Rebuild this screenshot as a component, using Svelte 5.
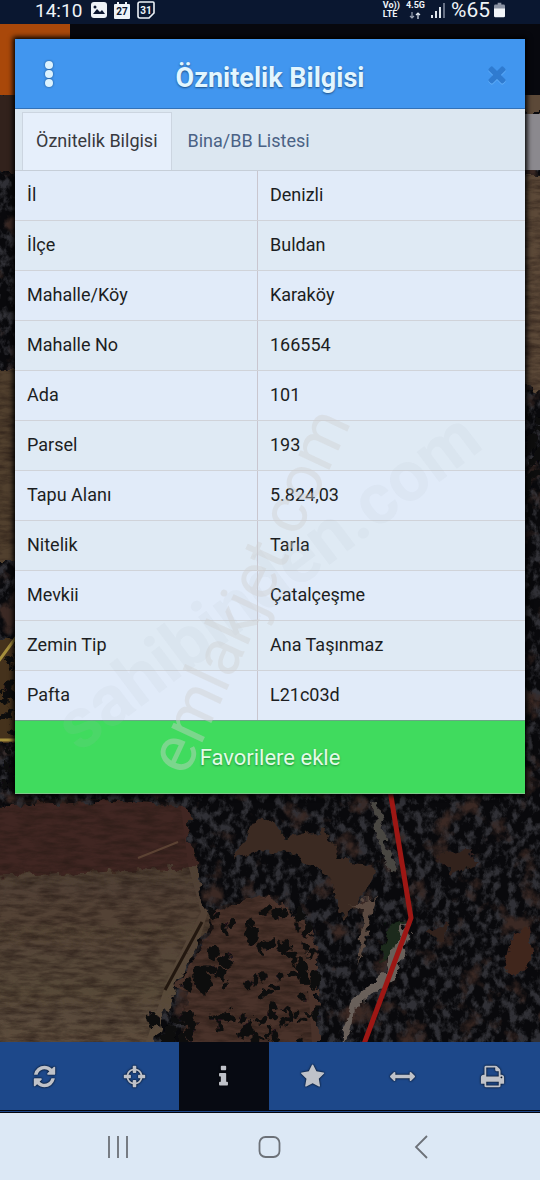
<script>
    import { onMount } from "svelte";

    let activeTab = "info";
    let activeTool = "info";
    let favorite = false;
    let open = true;

    const rows = [
        ["İl", "Denizli"],
        ["İlçe", "Buldan"],
        ["Mahalle/Köy", "Karaköy"],
        ["Mahalle No", "166554"],
        ["Ada", "101"],
        ["Parsel", "193"],
        ["Tapu Alanı", "5.824,03"],
        ["Nitelik", "Tarla"],
        ["Mevkii", "Çatalçeşme"],
        ["Zemin Tip", "Ana Taşınmaz"],
        ["Pafta", "L21c03d"],
    ];

    const tools = [
        { id: "refresh", label: "Yenile", d: "M1639 1056q0 5-1 7-64 268-268 434.5t-478 166.5q-146 0-282.5-55t-243.5-157l-129 129q-19 19-45 19t-45-19-19-45v-448q0-26 19-45t45-19h448q26 0 45 19t19 45-19 45l-137 137q71 66 161 102t187 36q134 0 250-65t186-179q11-17 53-117 8-23 30-23h192q13 0 22.5 9.5t9.5 22.5zm25-800v448q0 26-19 45t-45 19h-448q-26 0-45-19t-19-45 19-45l138-138q-148-137-349-137-134 0-250 65t-186 179q-11 17-53 117-8 23-30 23h-199q-13 0-22.5-9.5t-9.5-22.5v-7q65-268 270-434.5t480-166.5q146 0 284 55.5t245 156.5l130-129q19-19 45-19t45 19 19 45z" },
        { id: "locate", label: "Konum", d: "M1325 1024h-109q-26 0-45-19t-19-45v-128q0-26 19-45t45-19h109q-32-108-112.5-188.5t-188.5-112.5v109q0 26-19 45t-45 19h-128q-26 0-45-19t-19-45v-109q-108 32-188.5 112.5t-112.5 188.5h109q26 0 45 19t19 45v128q0 26-19 45t-45 19h-109q32 108 112.5 188.5t188.5 112.5v-109q0-26 19-45t45-19h128q26 0 45 19t19 45v109q108-32 188.5-112.5t112.5-188.5zm339-192v128q0 26-19 45t-45 19h-143q-37 161-154.5 278.5t-278.5 154.5v143q0 26-19 45t-45 19h-128q-26 0-45-19t-19-45v-143q-161-37-278.5-154.5t-154.5-278.5h-143q-26 0-45-19t-19-45v-128q0-26 19-45t45-19h143q37-161 154.5-278.5t278.5-154.5v-143q0-26 19-45t45-19h128q26 0 45 19t19 45v143q161 37 278.5 154.5t154.5 278.5h143q26 0 45 19t19 45z" },
        { id: "info", label: "Bilgi", d: "M1216 1344v128q0 26-19 45t-45 19h-512q-26 0-45-19t-19-45v-128q0-26 19-45t45-19h64v-384h-64q-26 0-45-19t-19-45v-128q0-26 19-45t45-19h384q26 0 45 19t19 45v576h64q26 0 45 19t19 45zm-128-1152v192q0 26-19 45t-45 19h-256q-26 0-45-19t-19-45v-192q0-26 19-45t45-19h256q26 0 45 19t19 45z" },
        { id: "star", label: "Favoriler", d: "M1664 647q0 22-26 48l-363 354 86 500q1 7 1 20 0 21-10.5 35.5t-30.5 14.5q-19 0-40-12l-449-236-449 236q-22 12-40 12-21 0-31.5-14.5t-10.5-35.5q0-6 2-20l86-500-364-354q-25-27-25-48 0-37 56-46l502-73 225-455q19-41 49-41t49 41l225 455 502 73q56 9 56 46z" },
        { id: "measure", label: "Ölçüm", d: "M1792 896q0 26-19 45l-256 256q-19 19-45 19t-45-19-19-45v-128h-1024v128q0 26-19 45t-45 19-45-19l-256-256q-19-19-19-45t19-45l256-256q19-19 45-19t45 19 19 45v128h1024v-128q0-26 19-45t45-19 45 19l256 256q19 19 19 45z" },
        { id: "print", label: "Yazdır", d: "M448 1536h896v-256h-896v256zm0-640h896v-384h-160q-40 0-68-28t-28-68v-160h-640v640zm1152 64q0-26-19-45t-45-19-45 19-19 45 19 45 45 19 45-19 19-45zm128 0v416q0 13-9.5 22.5t-22.5 9.5h-224v160q0 40-28 68t-68 28h-960q-40 0-68-28t-28-68v-160h-224q-13 0-22.5-9.5t-9.5-22.5v-416q0-79 56.5-135.5t135.5-56.5h64v-544q0-40 28-68t68-28h672q40 0 88 20t76 48l152 152q28 28 48 76t20 88v256h64q79 0 135.5 56.5t56.5 135.5z" },
    ];

    // same bushes on every load
    let seed = 11;
    function rnd() {
        seed = (seed * 16807) % 2147483647;
        return seed / 2147483647;
    }
    function scatter(n, x, y, w, h, min, max) {
        return Array.from({ length: n }, () => ({
            x: x + rnd() * w,
            y: y + rnd() * h,
            rx: min + rnd() * (max - min),
            ry: min + rnd() * (max - min) * 1.3,
        }));
    }
    const bushes = [
        ...scatter(85, 208, 908, 106, 132, 2, 6),
        ...scatter(14, 150, 1014, 40, 28, 3, 7),
        ...scatter(9, 178, 965, 30, 20, 4, 8),
        ...scatter(34, 0, 640, 16, 150, 2, 5),
        ...scatter(12, 520, 400, 20, 80, 3, 7),
    ];

    onMount(() => {
        const close = (e) => {
            if (e.key === "Escape") open = false;
        };
        document.addEventListener("keydown", close);
        return () => document.removeEventListener("keydown", close);
    });
</script>

<div class="screen">
    <header class="status">
        <div class="group">
            <time>14:10</time>
            <svg width="16" height="16" viewBox="0 0 16 16">
                <rect width="16" height="16" rx="3" fill="#eef3f8" />
                <path d="M2 12l4-5 3 3 2-2 3 4z" fill="#0b1630" />
                <circle cx="4" cy="5" r="1.5" fill="#0b1630" />
            </svg>
            <svg class="cal" width="16" height="17" viewBox="0 0 16 17">
                <path d="M1 2h2V0h2v2h6V0h2v2h2a1 1 0 0 1 1 1v13a1 1 0 0 1-1 1H1a1 1 0 0 1-1-1V3a1 1 0 0 1 1-1z" fill="#eef3f8" />
                <text x="8" y="13" text-anchor="middle" fill="#0b1630">27</text>
            </svg>
            <svg class="cal" width="18" height="18" viewBox="0 0 18 18">
                <path d="M3 1h13a1 1 0 0 1 1 1v10l-5 5H3a2 2 0 0 1-2-2V3a2 2 0 0 1 2-2z" fill="none" stroke="#eef3f8" stroke-width="1.6" />
                <text x="9" y="13" text-anchor="middle" fill="#eef3f8">31</text>
            </svg>
        </div>
        <div class="group right">
            <span class="tiny">Vo))<br />LTE</span>
            <span class="tiny net">4.5G
                <svg width="12" height="7" viewBox="0 0 12 7" fill="none" stroke="#9aa3b3" stroke-width="1.2">
                    <path d="M3 0v6M1 4l2 2 2-2" />
                    <path d="M9 7V1M7 3l2-2 2 2" stroke="#dfe6ee" />
                </svg>
            </span>
            <svg width="14" height="16" viewBox="0 0 14 16" fill="#dfe6ee">
                <path d="M0 13h2v3H0zM4 9h2v7H4zM8 5h2v11H8z" />
                <path d="M12 1h2v15h-2z" fill="#667085" />
            </svg>
            <span class="percent">%65</span>
            <svg width="11" height="16" viewBox="0 0 12 16">
                <path d="M4 0h4v2h2.500a1.500 1.500 0 0 1 1.500 1.500V6H0V3.500A1.500 1.500 0 0 1 1.500 2H4z" fill="#8b93a3" />
                <path d="M0 6h12v8.500a1.500 1.500 0 0 1-1.500 1.500h-9A1.500 1.500 0 0 1 0 14.500z" fill="#f2f5f9" />
            </svg>
        </div>
    </header>

    <main>
        <svg class="map" viewBox="0 24 540 1018" preserveAspectRatio="xMidYMid slice" aria-hidden="true">
            <defs>
                <filter id="rough" x="-5%" y="-5%" width="110%" height="110%">
                    <feTurbulence type="fractalNoise" baseFrequency="0.09" numOctaves="3" seed="4" />
                    <feDisplacementMap in="SourceGraphic" scale="14" xChannelSelector="R" yChannelSelector="G" />
                    <feGaussianBlur stdDeviation="0.6" />
                </filter>
                <filter id="leaves" x="0" y="0" width="100%" height="100%" color-interpolation-filters="sRGB">
                    <feTurbulence type="fractalNoise" baseFrequency="0.12 0.09" numOctaves="5" seed="8" />
                    <feColorMatrix values="0 0 0 0 .19  0 0 0 0 .19  0 0 0 0 .21  4 0 0 0 -1.8" />
                </filter>
                <filter id="gaps" x="0" y="0" width="100%" height="100%" color-interpolation-filters="sRGB">
                    <feTurbulence type="fractalNoise" baseFrequency="0.035" numOctaves="5" seed="21" />
                    <feColorMatrix values="0 0 0 0 .23  0 0 0 0 .16  0 0 0 0 .14  5 0 0 0 -2.9" />
                </filter>
                <filter id="grain" x="0" y="0" width="100%" height="100%" color-interpolation-filters="sRGB">
                    <feTurbulence type="fractalNoise" baseFrequency="0.05 0.2" numOctaves="5" seed="3" />
                    <feColorMatrix values="0 0 0 0 .15  0 0 0 0 .1  0 0 0 0 .08  1.3 0 0 0 -.45" />
                    <feComposite in2="SourceGraphic" operator="in" />
                </filter>
                <linearGradient id="field" x1="0" y1="0" x2="0" y2="1">
                    <stop offset="0" stop-color="#4f3f33" />
                    <stop offset="1" stop-color="#5c4d3c" />
                </linearGradient>
            </defs>
            <rect y="24" width="540" height="1018" fill="#09090c" />
            <rect y="24" width="540" height="1018" filter="url(#leaves)" />
            <rect y="24" width="540" height="1018" filter="url(#gaps)" />

            <g filter="url(#rough)">
                <path d="M-9 95H20V170H-9z" fill="#30201a" />
                <path d="M-9 370H20V560H-9z" fill="#51402e" />
                <path d="M-9 640H20V742H-9z" fill="#45301f" />
                <path d="M520 90H550V114H520zM520 175H550V392L520 385z" fill="#5b4938" />
                <path d="M-9 810L30 803 120 802 187 806 189 837 197 871 -9 878z" fill="#402820" />
                <path d="M-9 876L196 867 203 905 210 917 201 937 177 980 157 1035 153 1057H-9z" fill="url(#field)" />
                <path d="M209 913L243 901 259 893 295 913 311 930 319 960 319 1057H183L187 995 175 985 213 930z" fill="#48302a" />
                <path d="M232 860L250 830 262 815 287 838 327 830 340 858 374 868 364 896 342 920 330 876 290 852 260 850z" fill="#3b2a22" />
                <path d="M371 803L379 805 383 835 397 873 389 871 377 835z" fill="#4a4643" />
                <path d="M350 905L374 897 367 935 359 965 363 910z" fill="#5a4a40" />
                <path d="M400 921L411 935 395 977 371 995 355 1009 351 1035 341 1049 351 1001 385 971z" fill="#69605a" />
                <path d="M388 925L403 920 395 950 381 964z" fill="#1c2a1a" />
                <path d="M513 935L528 925 532 960 518 976 505 970z" fill="#40261f" />
                <path d="M434 855L465 850 480 862 452 872zM425 932L452 922 440 942z" fill="#30211e" />
            </g>
            <path d="M0 799H180L188 864 201 912 169 975 146 1042H0z" filter="url(#grain)" />
            <path d="M208 912L254 892 304 925 312 1042H180L184 990z" filter="url(#grain)" />
            <path d="M0 370H15V560H0zM525 175H540V390H525z" filter="url(#grain)" />
            <g fill="#0d0c0e" filter="url(#rough)">
                {#each bushes as b}
                    <ellipse cx={b.x + 3} cy={b.y + 3} rx={b.rx} ry={b.ry} />
                {/each}
            </g>
            <path d="M138 858L178 842" stroke="#5b4233" stroke-width="2" />
            <path d="M202 922L165 990" stroke="#22170f" stroke-width="3" />
            <path d="M390 790L411 918 364 1044" fill="none" stroke="#9d1714" stroke-width="5" stroke-linejoin="round" />
            <path d="M-2 662L20 632M0 740H20" fill="none" stroke="#a58e3c" stroke-width="3" />
            <rect x="510" y="114" width="40" height="56" fill="#8b898e" />
        </svg>
        <div class="appbar"><span class="brand"></span></div>

        {#if open}
            <section class="dialog" aria-label="Öznitelik Bilgisi">
                <div class="title">
                    <button class="more" aria-label="Menü">
                        <svg width="10" height="28" viewBox="0 0 10 28" fill="#dcf3ff">
                            <circle cx="5" cy="5" r="4" />
                            <circle cx="5" cy="14" r="4" />
                            <circle cx="5" cy="23" r="4" />
                        </svg>
                    </button>
                    <h1>Öznitelik Bilgisi</h1>
                    <button class="close" aria-label="Kapat" on:click={() => (open = false)}>
                        <svg width="26" height="26" viewBox="0 0 1792 1792" fill="#2f7bd0">
                            <path d="M1490 1322q0 40-28 68l-136 136q-28 28-68 28t-68-28l-294-294-294 294q-28 28-68 28t-68-28l-136-136q-28-28-28-68t28-68l294-294-294-294q-28-28-28-68t28-68l136-136q28-28 68-28t68 28l294 294 294-294q28-28 68-28t68 28l136 136q28 28 28 68t-28 68l-294 294 294 294q28 28 28 68z" />
                        </svg>
                    </button>
                </div>
                <nav class="tabs">
                    <button class:active={activeTab === "info"} on:click={() => (activeTab = "info")}>Öznitelik Bilgisi</button>
                    <button class:active={activeTab === "list"} on:click={() => (activeTab = "list")}>Bina/BB Listesi</button>
                </nav>
                <table>
                    <tbody>
                        {#each rows as [name, value]}
                            <tr>
                                <th scope="row">{name}</th>
                                <td>{value}</td>
                            </tr>
                        {/each}
                    </tbody>
                </table>
                <button class="favorite" on:click={() => (favorite = !favorite)}>Favorilere ekle</button>
                <svg class="marks" viewBox="0 0 510 754" aria-hidden="true">
                    <text class="bold" transform="translate(64 714) rotate(-37)">sahibinden.com</text>
                    <text class="thin" transform="translate(171 738) rotate(-65)">emlakjet.com</text>
                </svg>
            </section>
        {/if}
    </main>

    <nav class="toolbar">
        {#each tools as tool}
            <button class:active={activeTool === tool.id} aria-label={tool.label} on:click={() => (activeTool = tool.id)}>
                <svg width="25" height="25" viewBox="0 0 1792 1792"><path d={tool.d} /></svg>
            </button>
        {/each}
    </nav>

    <nav class="system">
        <button aria-label="Son uygulamalar">
            <svg width="24" height="24" viewBox="0 0 24 24"><path d="M3 1v22M12 1v22M21 1v22" /></svg>
        </button>
        <button aria-label="Ana ekran">
            <svg width="24" height="24" viewBox="0 0 24 24"><rect x="1.500" y="2" width="20" height="20" rx="6" /></svg>
        </button>
        <button aria-label="Geri">
            <svg width="24" height="24" viewBox="0 0 24 24"><path d="M17 1L6 12l11 11" /></svg>
        </button>
    </nav>
</div>

<style>
    :global(body) {
        margin: 0;
        background: #dce8f5;
    }
    .screen {
        display: flex;
        flex-direction: column;
        min-height: 100vh;
        font-family: Roboto, "Noto Sans", sans-serif;
    }
    button {
        border: 0;
        padding: 0;
        background: none;
        font: inherit;
        color: inherit;
        cursor: pointer;
    }
    button svg {
        display: block;
    }

    .status {
        display: flex;
        justify-content: space-between;
        align-items: center;
        box-sizing: border-box;
        height: 24px;
        padding: 0 35px 4px;
        background: #0a1730;
        color: #eef3f8;
        font-size: 19px;
    }
    .group {
        display: flex;
        align-items: center;
        gap: 7px;
    }
    .group time {
        margin-right: 2px;
    }
    .right {
        gap: 6px;
    }
    .cal text {
        font-size: 10px;
        font-weight: 700;
    }
    .tiny {
        font-size: 9px;
        line-height: 9px;
        font-weight: 700;
    }
    .net {
        display: flex;
        flex-direction: column;
        align-items: center;
        gap: 2px;
    }
    .percent {
        margin-right: -2px;
        font-size: 21px;
    }

    main {
        position: relative;
        flex: 1;
        overflow: hidden;
    }
    .map {
        position: absolute;
        inset: 0;
        width: 100%;
        height: 100%;
    }
    .appbar {
        position: absolute;
        inset: 0 0 auto;
        height: 71px;
        background: #07080e;
    }
    .brand {
        display: block;
        width: 70px;
        height: 100%;
        background: #a9480a;
    }

    .dialog {
        position: relative;
        margin: 15px;
        background: #e1ebf9;
        box-shadow: 0 0 5px 2px #000;
    }
    .title {
        display: grid;
        grid-template-columns: 68px 1fr 68px;
        align-items: center;
        height: 69px;
        background: #4196ef;
        border-bottom: 1px solid #3272b8;
    }
    .title h1 {
        margin: 0;
        padding-top: 8px;
        text-align: center;
        font-size: 27px;
        line-height: 32px;
        font-weight: 700;
        color: #e2f6ff;
        text-shadow: 0 1px 2px #1d4f86;
    }
    .more {
        justify-self: center;
        filter: drop-shadow(0 0 1px #1d4f86);
    }
    .close {
        justify-self: end;
        padding-right: 15px;
        filter: drop-shadow(0 1px 0 #62b0fa);
    }
    .tabs {
        display: flex;
        gap: 2px;
        padding: 3px 7px 0;
        background: #dce7f1;
        border-bottom: 1px solid #c6ced8;
        font-size: 18px;
    }
    .tabs button {
        border: solid transparent;
        border-width: 1px 1px 0;
        padding: 0 13px 1px;
        line-height: 56px;
        color: #4a6285;
    }
    .tabs .active {
        border-color: #ccd5e0;
        background: #e6effb;
        color: #38393e;
    }
    table {
        width: 100%;
        border-collapse: collapse;
        font-size: 18px;
        line-height: 47px;
        color: #1c1e22;
    }
    th,
    td {
        padding: 0 12px 2px;
        text-align: left;
        font-weight: 400;
        border-bottom: 1px solid #d0d3d9;
    }
    th {
        width: 218px;
        border-right: 1px solid #c9c6cf;
    }
    tr:nth-child(even) {
        background: #dfeaf4;
    }
    tr:last-child > * {
        border-bottom-color: #69a884;
    }
    .favorite {
        display: block;
        width: 100%;
        height: 73px;
        background: #40db5e;
        border-bottom: 1px solid #7fc88a;
        color: #e2fbe6;
        font-size: 22px;
        text-shadow: 0 1px 2px #1f8a38;
    }
    .marks {
        position: absolute;
        inset: 0;
        width: 100%;
        height: 100%;
        pointer-events: none;
    }
    .bold {
        font-size: 71px;
        font-weight: 700;
        fill: #b4bcc4;
        fill-opacity: .1;
    }
    .thin {
        font-size: 65px;
        fill: #cfd0d0;
        fill-opacity: .42;
    }

    .toolbar {
        display: grid;
        grid-template-columns: repeat(6, 1fr);
        padding-right: 3px;
        background: #1d488a;
        border-bottom: 3px double #05070c;
    }
    .toolbar button {
        display: grid;
        place-items: center;
        height: 68px;
    }
    .toolbar .active {
        background: #070a12;
    }
    .toolbar svg {
        fill: #bfc2c9;
        filter: drop-shadow(0 0 1px #000);
    }

    .system {
        display: grid;
        grid-template-columns: repeat(3, 1fr);
        height: 67px;
        padding: 0 42px;
        background: #dce8f5;
    }
    .system button {
        display: grid;
        place-items: center;
    }
    .system svg {
        fill: none;
        stroke: #6c7178;
        stroke-width: 1.800;
    }
</style>
